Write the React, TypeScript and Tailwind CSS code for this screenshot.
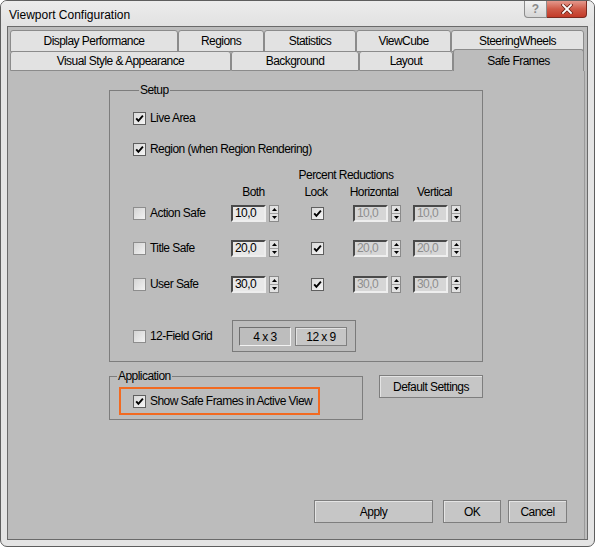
import React from 'react';

const Check = ({ checked }: { checked?: boolean }) => (
  <span
    className={`w-[13px] h-[13px] shrink-0 flex items-center justify-center border bg-gradient-to-br ${
      checked ? 'border-[#5f5f5f] from-[#d9d9d9] to-[#f5f5f5]' : 'border-[#8d8d8d] from-[#d4d4d4] to-[#f2f2f2]'
    }`}
  >
    {checked && (
      <svg width="9" height="9" viewBox="0 0 9 9">
        <path d="M1.2 4.3 L3.4 6.8 L7.9 1.6" fill="none" stroke="#000" strokeWidth="1.9" />
      </svg>
    )}
  </span>
);

const Spin = ({ value, disabled }: { value: string; disabled?: boolean }) => (
  <div className="flex items-center gap-[3px]">
    <div
      className={`w-[35px] h-[17px] border-2 border-t-[#4a4a4a] border-l-[#4a4a4a] border-r-[#eeeeee] border-b-[#eeeeee] pl-[2px] leading-[13px] ${
        disabled ? 'bg-[#d6d6d6] text-[#8e8e8e]' : 'bg-[#e8e8e8] text-black'
      }`}
    >
      {value}
    </div>
    <div className="w-[10px] h-[17px] border border-[#8a8a8a] bg-[#e2e2e2] flex flex-col">
      <span className="flex-1 flex items-center justify-center border-b border-[#a0a0a0]">
        <svg width="5" height="3" viewBox="0 0 5 3">
          <path d="M0 3 L2.5 0 L5 3 Z" fill="#000" />
        </svg>
      </span>
      <span className="flex-1 flex items-center justify-center">
        <svg width="5" height="3" viewBox="0 0 5 3">
          <path d="M0 0 L5 0 L2.5 3 Z" fill="#000" />
        </svg>
      </span>
    </div>
  </div>
);

const Tab = ({ label, w, active }: { label: string; w: string; active?: boolean }) => (
  <div
    className={`${w} shrink-0 flex items-center justify-center border border-[#8b8b8b] rounded-t-[3px] ${
      active ? 'bg-[#bcbcbc] border-b-0 h-[22px] -mt-[2px] relative z-10' : 'bg-[#e2e2e2] h-full'
    }`}
  >
    {label}
  </div>
);

const Btn = ({ label, w }: { label: string; w: string }) => (
  <button
    type="button"
    className={`${w} h-[23px] flex items-center justify-center bg-[#c6c6c6] border border-[#7e7e7e] shadow-[inset_1px_1px_0_#e4e4e4]`}
  >
    {label}
  </button>
);

const SafeRow = ({ label, value }: { label: string; value: string }) => (
  <div className="flex items-center h-[18px]">
    <div className="w-[98px] flex items-center gap-[4px]">
      <Check />
      <span>{label}</span>
    </div>
    <Spin value={value} />
    <div className="ml-[32px]">
      <Check checked />
    </div>
    <div className="ml-[29px]">
      <Spin value={value} disabled />
    </div>
    <div className="ml-[12px]">
      <Spin value={value} disabled />
    </div>
  </div>
);

const App: React.FC = () => {
  return (
    <div className="w-[595px] h-[547px] flex flex-col border border-[#5e5e5e] rounded-[7px] bg-[#e4e4e4] overflow-hidden text-[12px] text-black font-['Liberation_Sans',Arial,sans-serif]">
      {/* Title bar */}
      <div className="h-[25px] shrink-0 flex justify-between bg-gradient-to-b from-[#ececec] to-[#e2e2e2]">
        <span className="pl-[8px] pt-[5px]">Viewport Configuration</span>
        <div className="flex mr-[7px] h-[17px]">
          <div className="w-[23px] flex items-center justify-center border border-[#8c8c8c] border-t-0 rounded-bl-[4px] bg-gradient-to-b from-[#f2f2f2] to-[#d6d6d6] text-[#8a8a8a] font-bold text-[12px]">
            ?
          </div>
          <div className="w-[40px] flex items-center justify-center border border-[#7b2a20] border-t-0 border-l-0 rounded-br-[4px] bg-gradient-to-b from-[#e4988c] via-[#cf5a48] to-[#c23a28]">
            <svg width="12" height="10" viewBox="0 0 12 10">
              <path d="M2 1 L10 9 M10 1 L2 9" stroke="#6b2418" strokeWidth="3.4" strokeLinecap="square" />
              <path d="M2 1 L10 9 M10 1 L2 9" stroke="#ffffff" strokeWidth="1.8" strokeLinecap="square" />
            </svg>
          </div>
        </div>
      </div>

      {/* Window body */}
      <div className="h-[514px] mx-[6px] border border-[#6a6a6a] bg-[#bcbcbc] flex flex-col px-[2px] pt-[3px] tracking-[-0.55px]">
        {/* Tabs */}
        <div className="flex h-[22px]">
          <Tab label="Display Performance" w="w-[168px]" />
          <Tab label="Regions" w="w-[86px]" />
          <Tab label="Statistics" w="w-[92px]" />
          <Tab label="ViewCube" w="w-[95px]" />
          <Tab label="SteeringWheels" w="w-[133px]" />
        </div>
        <div className="flex h-[20px] -mt-px items-start">
          <Tab label="Visual Style & Appearance" w="w-[221px]" />
          <Tab label="Background" w="w-[128px]" />
          <Tab label="Layout" w="w-[94px]" />
          <Tab label="Safe Frames" w="w-[131px]" active />
        </div>

        {/* Panel */}
        <div className="flex-1 flex flex-col w-[575px] border-r border-[#9a9a9a]">
          <fieldset className="ml-[99px] mt-[12px] w-[374px] border border-[#7d7d7d] pl-[23px] pb-[9px]">
            <legend className="ml-[6px] px-[1px] leading-[14px]">Setup</legend>
            <div className="mt-[11px] h-[20px] flex items-center gap-[4px]">
              <Check checked />
              <span>Live Area</span>
            </div>
            <div className="mt-[11px] h-[20px] flex items-center gap-[4px]">
              <Check checked />
              <span>Region (when Region Rendering)</span>
            </div>
            <div className="mt-[7px] h-[16px] flex">
              <div className="ml-[143px] w-[140px] flex justify-center whitespace-nowrap">Percent Reductions</div>
            </div>
            <div className="mt-[2px] h-[16px] flex items-center whitespace-nowrap">
              <div className="w-[98px]" />
              <div className="w-[45px] flex justify-center">Both</div>
              <div className="w-[80px] flex justify-center">Lock</div>
              <div className="w-[36px] flex justify-center">Horizontal</div>
              <div className="w-[85px] flex justify-center">Vertical</div>
            </div>
            <div className="mt-[4px]">
              <SafeRow label="Action Safe" value="10,0" />
            </div>
            <div className="mt-[17px]">
              <SafeRow label="Title Safe" value="20,0" />
            </div>
            <div className="mt-[18px]">
              <SafeRow label="User Safe" value="30,0" />
            </div>
            <div className="mt-[27px] flex items-center">
              <div className="w-[99px] flex items-center gap-[4px]">
                <Check />
                <span>12-Field Grid</span>
              </div>
              <div className="w-[124px] h-[32px] border border-[#7a7a7a] flex items-start gap-[4px] pl-[6px] pt-[6px]">
                <div className="w-[52px] h-[19px] flex items-center justify-center bg-[#bdbdbd] border border-t-[#6e6e6e] border-l-[#6e6e6e] border-r-[#f2f2f2] border-b-[#f2f2f2]">
                  4 x 3
                </div>
                <div className="w-[52px] h-[19px] flex items-center justify-center bg-[#c6c6c6] border border-[#808080] shadow-[inset_1px_1px_0_#e2e2e2]">
                  12 x 9
                </div>
              </div>
            </div>
          </fieldset>

          <div className="flex items-start mt-[7px]">
            <fieldset className="ml-[99px] w-[254px] border border-[#7d7d7d] pb-[4px]">
              <legend className="ml-[7px] px-[1px] leading-[14px]">Application</legend>
              <div className="ml-[9px] mt-[4px] w-[201px] h-[28px] border-2 border-[#f26a21] flex items-center gap-[4px] pl-[12px]">
                <Check checked />
                <span>Show Safe Frames in Active View</span>
              </div>
            </fieldset>
            <div className="ml-[16px] mt-[6px]">
              <Btn label="Default Settings" w="w-[104px]" />
            </div>
          </div>

          <div className="mt-auto pb-[16px] pr-[17px] flex justify-end">
            <Btn label="Apply" w="w-[119px]" />
            <div className="ml-[10px]">
              <Btn label="OK" w="w-[58px]" />
            </div>
            <div className="ml-[7px]">
              <Btn label="Cancel" w="w-[59px]" />
            </div>
          </div>
        </div>
      </div>
    </div>
  );
};

export default App;
